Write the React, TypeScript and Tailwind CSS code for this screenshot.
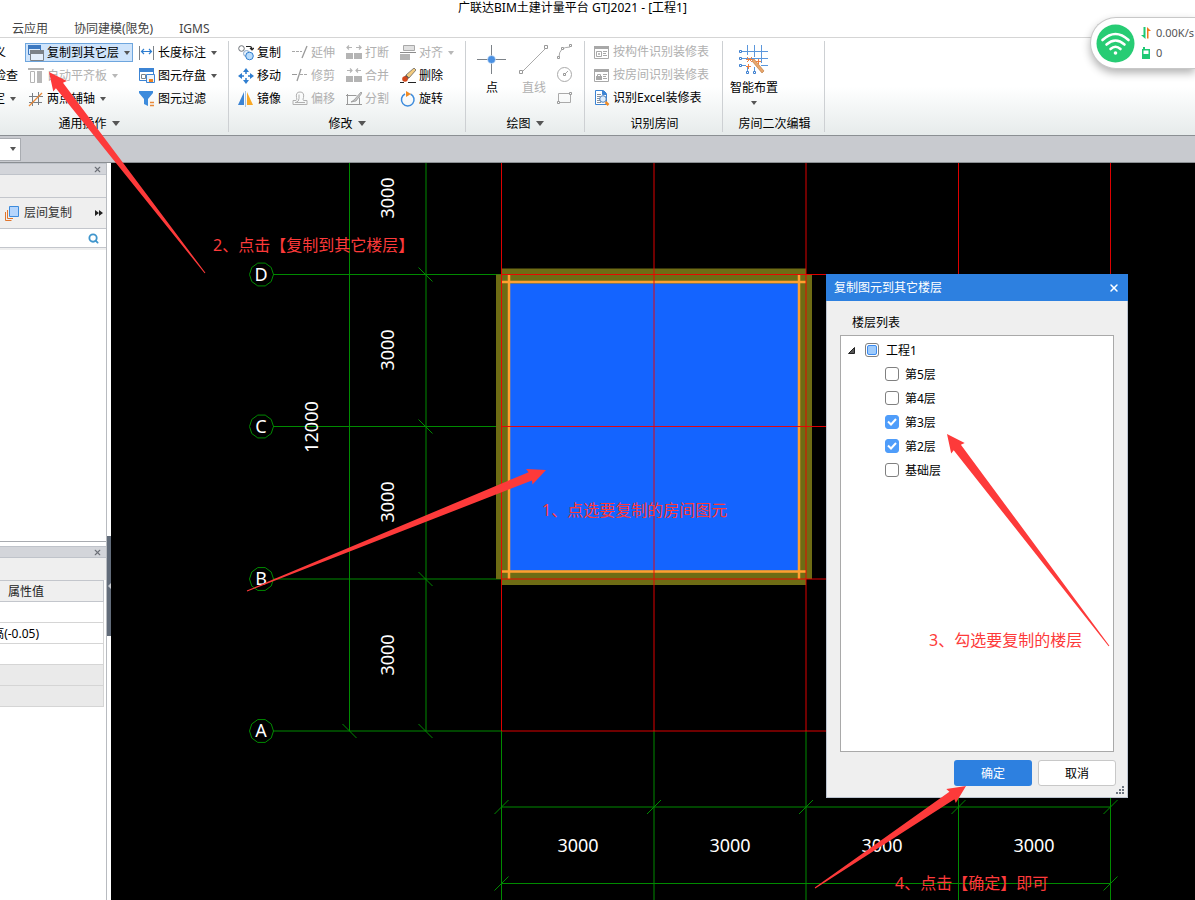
import React, { useState } from 'react';
import { Search, X } from 'lucide-react';

interface IconProps {
  size?: number;
  children: React.ReactNode;
}

function Icon({ size = 16, children }: IconProps) {
  return (
    <svg width={size} height={size} viewBox={`0 0 ${size} ${size}`} fill="none" className="mt-px shrink-0" aria-hidden="true">
      {children}
    </svg>
  );
}

function Caret({ className = 'text-[#555]', wide = false }: { className?: string; wide?: boolean }) {
  return (
    <svg width={wide ? 8 : 6} height={wide ? 5 : 4} viewBox="0 0 6 4" preserveAspectRatio="none" className={`shrink-0 ${className}`} aria-hidden="true">
      <path d="M0 0h6L3 4z" fill="currentColor" />
    </svg>
  );
}

const icons = {
  copyFloor: (
    <Icon>
      <path d="M0.5 0.5h12v9h-12z" fill="#dcebfb" stroke="#3c78c0" />
      <path d="M0 0h13v4H0z" fill="#3c78c0" />
      <path d="M2.5 5.5h13v10h-13z" fill="#e4eefa" stroke="#7c8288" />
      <path d="M2 5h14v4H2z" fill="#7c8288" />
    </Icon>
  ),
  alignSlab: (
    <Icon>
      <path d="M0 1h16" stroke="#b4b4b4" strokeWidth="2" />
      <path d="M2.5 3.500h4v11h-4z" stroke="#b4b4b4" />
      <path d="M9 3h5v12H9z" fill="#b8b8b8" />
    </Icon>
  ),
  axis: (
    <Icon>
      <path d="M4.500 2v13M10.500 1v13M1 5.500h14M1 11.500h13" stroke="#7a7f85" />
      <path d="M1 15L14 2" stroke="#e8893a" strokeWidth="1.300" />
    </Icon>
  ),
  length: (
    <Icon>
      <path d="M0.500 1v14M14.500 1v14" stroke="#7c8288" />
      <path d="M2.500 6.500h10M5 4L2.500 6.500 5 9M10 4l2.500 2.500L10 9" stroke="#2f7ed0" strokeWidth="1.200" />
    </Icon>
  ),
  save: (
    <Icon>
      <path d="M0.500 0.500h14v12h-14z" fill="#fff" stroke="#3c84d4" />
      <path d="M0 0h15v4H0z" fill="#3c84d4" />
      <path d="M2.500 6.500h4v4h-4z" stroke="#7c8288" />
      <path d="M7.500 6.500h8v8h-8z" fill="#eef4fb" stroke="#3c84d4" />
      <path d="M10 11h4v3h-4z" fill="#ee8424" />
    </Icon>
  ),
  filter: (
    <Icon>
      <path d="M0 0h14v2L9 8v7l-4-2V8L0 2z" fill="#3d8bdc" />
      <path d="M11 11.500h4M11 14.500h4" stroke="#e8893a" strokeWidth="1.300" />
    </Icon>
  ),
  copy: (
    <Icon>
      <circle cx="3.500" cy="3.500" r="2.800" stroke="#6a6f75" />
      <circle cx="8.500" cy="8.500" r="3" fill="#e6f1fc" stroke="#8aa8c8" />
      <circle cx="11.500" cy="11" r="3.800" fill="#b9dcfb" stroke="#2f7ed0" />
      <path d="M8 1.500h4q2 0 2 3M12 3l2 2 2-2" stroke="#222" strokeWidth="1.200" />
    </Icon>
  ),
  move: (
    <Icon>
      <path d="M8 0l3 4H5zM8 16l3-4H5zM0 8l4-3v6zM16 8l-4-3v6z" fill="#2f7ed0" />
      <path d="M8 3v3M8 10v3M3 8h3M10 8h3" stroke="#2f7ed0" strokeWidth="1.500" />
    </Icon>
  ),
  mirror: (
    <Icon>
      <path d="M6 1v13H0z" fill="#3c84d4" />
      <path d="M9 1v13h6z" fill="#f9a825" />
      <path d="M7.500 0v16" stroke="#a8c4e0" />
    </Icon>
  ),
  extend: (
    <Icon>
      <path d="M0 6.500h10" stroke="#a8a8a8" strokeDasharray="3 1" />
      <path d="M15 1l-5 12" stroke="#9a9a9a" strokeWidth="1.300" />
    </Icon>
  ),
  trim: (
    <Icon>
      <path d="M0 6.500h5" stroke="#9a9a9a" />
      <path d="M9 1L5 13" stroke="#9a9a9a" strokeWidth="1.300" />
      <path d="M8 6.500h8" stroke="#a8a8a8" strokeDasharray="3 1" />
    </Icon>
  ),
  offset: (
    <Icon>
      <path d="M1 13.500h14v-4h-3.500q-1-1 0-3 1-5.500-3.500-5.500t-3.500 5.500q1 2-0.500 3H1z" stroke="#b0b0b0" />
      <path d="M3 11.500h10M7 3.500v4q0 3-3 4" stroke="#b0b0b0" />
    </Icon>
  ),
  split: (
    <Icon>
      <path d="M0 8h7v6H0zM8 8h8v6H8z" fill="#b4b4b4" />
      <path d="M1 2.500h5M3 0.500l-2 2 2 2M10 2.500h5M13 0.500l2 2-2 2" stroke="#b4b4b4" strokeWidth="1.200" />
    </Icon>
  ),
  merge: (
    <Icon>
      <path d="M0 8h7v6H0zM8 8h8v6H8z" fill="#b4b4b4" />
      <path d="M1 2.500h5M4 0.500l2 2-2 2M10 2.500h5M12 0.500l-2 2 2 2" stroke="#b4b4b4" strokeWidth="1.200" />
    </Icon>
  ),
  cut: (
    <Icon>
      <path d="M1.500 4.500h9M1.500 4.500v9h12v-7M0 4.500h3M12 13.500h4M0 13.500h3M1.500 3v3" stroke="#9a9a9a" />
      <path d="M15 1L8 9l-3 2 5-1 6-8z" fill="#c8c8c8" stroke="#8c8c8c" strokeWidth="0.700" />
    </Icon>
  ),
  align: (
    <Icon>
      <path d="M3.500 0.500h11v5h-11z" fill="#e0e0e0" stroke="#a8a8a8" />
      <path d="M0 7.500h16" stroke="#8c8c8c" />
      <path d="M0 9h10v6H0z" fill="#b4b4b4" />
    </Icon>
  ),
  erase: (
    <Icon>
      <path d="M14 0l2 2-7 8-3-3z" fill="#f3cb7e" stroke="#555" strokeWidth="0.700" />
      <path d="M6 7l3 3-2 2-3-3z" fill="#555" />
      <circle cx="5" cy="11" r="2.800" fill="#d2481c" />
      <path d="M0 14.500h4M8 14.500h8" stroke="#222" />
    </Icon>
  ),
  rotate: (
    <Icon>
      <path d="M10.500 3A6.300 6.300 0 1 1 5 3" stroke="#3d8bdc" strokeWidth="1.500" />
      <path d="M6 0l5 3-5 3z" fill="#f08a24" />
    </Icon>
  ),
  arc: (
    <Icon>
      <path d="M2 13Q2 3 13 3" stroke="#aaa" />
      <path d="M0.500 12.500h2v2h-2zM4.500 3.500h2v2h-2zM12.500 0.500h2v2h-2z" fill="#fff" stroke="#999" />
    </Icon>
  ),
  circle: (
    <Icon>
      <circle cx="7.500" cy="7.500" r="7" stroke="#aaa" />
      <path d="M7 8l4-4" stroke="#aaa" />
      <path d="M6.500 6.500h2v2h-2z" fill="#fff" stroke="#999" />
    </Icon>
  ),
  rect: (
    <Icon>
      <path d="M1.500 3.500h12v9h-12z" stroke="#aaa" />
      <path d="M0.500 11.500h2v2h-2zM12.500 2.500h2v2h-2z" fill="#fff" stroke="#999" />
    </Icon>
  ),
  byPart: (
    <Icon>
      <path d="M0.500 1.500h14v12h-14z" stroke="#a8a8a8" />
      <path d="M0 1h15v3H0z" fill="#a8a8a8" />
      <path d="M2.500 6.500h5v5h-5zM4.500 8.500h1v1h-1zM9 6.500h4M9 8.500h3M9 10.500h4" stroke="#a8a8a8" />
    </Icon>
  ),
  byRoom: (
    <Icon>
      <path d="M0.500 1.500h14v12h-14z" stroke="#a8a8a8" />
      <path d="M0 1h15v3H0z" fill="#a8a8a8" />
      <path d="M2 8h6v4H2z" fill="#a8a8a8" />
      <path d="M3.500 8V6.500h3V8M9 6.500h4M9 8.500h3M9 10.500h4" stroke="#a8a8a8" />
    </Icon>
  ),
  excel: (
    <Icon>
      <path d="M1.500 0.500h8l3 3v11h-11z" fill="#fff" stroke="#3c84d4" />
      <path d="M8.500 0.500v4h4z" fill="#3c84d4" stroke="#3c84d4" />
      <path d="M3 4.500h4M3 6.500h3M3 8.500h3M3 10.500h3M3 12.500h4" stroke="#8a9098" />
      <circle cx="9" cy="9" r="3.300" fill="#dcecfb" stroke="#4a7db8" />
      <path d="M11.500 12l3 3" stroke="#f08a24" strokeWidth="2.500" />
    </Icon>
  ),
  point: (
    <Icon size={30}>
      <path d="M14.500 0v29M0 14.500h29" stroke="#7c8288" />
      <circle cx="14.500" cy="14.500" r="4" fill="#4a90e2" stroke="#fff" strokeWidth="0.500" />
    </Icon>
  ),
  line: (
    <Icon size={30}>
      <path d="M3 27L27 3" stroke="#aaa" />
      <path d="M0.500 25.500h3v3h-3zM25.500 0.500h3v3h-3z" fill="#fff" stroke="#999" />
    </Icon>
  ),
  smart: (
    <Icon size={30}>
      <path d="M3 6.500h26M3 13.500h26M3 20.500h4M22 20.500h7M8.500 0v10M15.500 0v12M22.500 0v18M8.500 22v4M15.500 22v4" stroke="#5b97dc" />
      <path d="M0.500 5.500h2v2h-2zM0.500 12.500h2v2h-2zM0.500 19.500h2v2h-2zM7.500 26.500h2v2h-2zM14.500 26.500h2v2h-2z" fill="#fff" stroke="#3d7fcf" />
      <path d="M13 16l10 12 2-2-10-12z" fill="#e8a66c" stroke="#b87437" strokeWidth="0.600" />
      <path d="M8 12l5 5M13 12l-5 5M7 14.500h7M9.500 19v5M7 21.500h5M19.500 14v5M17 16.500h5" stroke="#f08040" />
    </Icon>
  ),
};

interface RibbonButtonProps {
  icon: React.ReactNode;
  label: string;
  disabled?: boolean;
  active?: boolean;
  caret?: boolean;
}

function RibbonButton({ icon, label, disabled, active, caret }: RibbonButtonProps) {
  return (
    <div className="flex h-[23px] items-center">
      <button
        type="button"
        disabled={disabled}
        className={`flex h-[19px] items-center gap-[3px] border whitespace-nowrap ${
          active ? 'border-[#6ea6de] bg-[#cfe4fb]' : 'border-transparent'
        } px-[2px] ${disabled ? 'text-[#b0b0b0]' : 'text-black'}`}
      >
        {icon}
        <span>{label}</span>
        {caret && (
          <span className="flex pl-[2px]">
            <Caret className={disabled ? 'text-[#b8b8b8]' : 'text-[#555]'} />
          </span>
        )}
      </button>
    </div>
  );
}

function Divider() {
  return <div className="my-[3px] w-px shrink-0 bg-[#cdd0d3]" />;
}

function GroupLabel({ children, caret, className = 'pt-0.5' }: { children: string; caret?: boolean; className?: string }) {
  return (
    <div className={`flex h-[26px] items-center justify-center gap-[5px] whitespace-nowrap ${className}`}>
      {children}
      {caret && <Caret wide />}
    </div>
  );
}

function Ribbon() {
  return (
    <div className="flex h-[98px] border-b border-[#8b8f93] bg-linear-to-b from-white from-50% to-[#e6ebeb]">
      {/* General operations */}
      <div className="flex w-[228px] shrink-0 flex-col pt-[3px]">
        <div className="flex">
          <div className="flex w-[24px] flex-col overflow-hidden">
            <button type="button" className="flex h-[23px] items-center justify-end pr-[18px] whitespace-nowrap">义</button>
            <button type="button" className="flex h-[23px] items-center justify-end pr-[6px] whitespace-nowrap">检查</button>
            <button type="button" className="flex h-[23px] items-center justify-end gap-[5px] pr-[8px] whitespace-nowrap">
              定
              <Caret />
            </button>
          </div>
          <div className="w-[112px] pl-px">
            <RibbonButton icon={icons.copyFloor} label="复制到其它层" active caret />
            <RibbonButton icon={icons.alignSlab} label="自动平齐板" disabled caret />
            <RibbonButton icon={icons.axis} label="两点辅轴" caret />
          </div>
          <div>
            <RibbonButton icon={icons.length} label="长度标注" caret />
            <RibbonButton icon={icons.save} label="图元存盘" caret />
            <RibbonButton icon={icons.filter} label="图元过滤" />
          </div>
        </div>
        <GroupLabel caret className="pt-0.5 pr-[50px]">通用操作</GroupLabel>
      </div>
      <Divider />

      {/* Modify */}
      <div className="flex w-[236px] shrink-0 flex-col pt-[3px]">
        <div className="grid grid-cols-[54px_54px_54px_60px] pl-[6px]">
          <RibbonButton icon={icons.copy} label="复制" />
          <RibbonButton icon={icons.extend} label="延伸" disabled />
          <RibbonButton icon={icons.split} label="打断" disabled />
          <RibbonButton icon={icons.align} label="对齐" disabled caret />
          <RibbonButton icon={icons.move} label="移动" />
          <RibbonButton icon={icons.trim} label="修剪" disabled />
          <RibbonButton icon={icons.merge} label="合并" disabled />
          <RibbonButton icon={icons.erase} label="删除" />
          <RibbonButton icon={icons.mirror} label="镜像" />
          <RibbonButton icon={icons.offset} label="偏移" disabled />
          <RibbonButton icon={icons.cut} label="分割" disabled />
          <RibbonButton icon={icons.rotate} label="旋转" />
        </div>
        <GroupLabel caret>修改</GroupLabel>
      </div>
      <Divider />

      {/* Draw */}
      <div className="flex w-[118px] shrink-0 flex-col pt-[3px]">
        <div className="flex">
          <button type="button" className="flex w-[52px] flex-col items-center gap-[5px] pt-[3px] leading-4">
            {icons.point}
            点
          </button>
          <button type="button" disabled className="flex w-[32px] flex-col items-center gap-[5px] pt-[3px] leading-4 text-[#b0b0b0]">
            {icons.line}
            直线
          </button>
          <div className="flex flex-col pl-[7px]">
            <button type="button" disabled aria-label="弧线" className="flex h-[23px] items-start pt-0.5">{icons.arc}</button>
            <button type="button" disabled aria-label="圆" className="flex h-[23px] items-start pt-0.5">{icons.circle}</button>
            <button type="button" disabled aria-label="矩形" className="flex h-[23px] items-start pt-0.5">{icons.rect}</button>
          </div>
        </div>
        <GroupLabel caret>绘图</GroupLabel>
      </div>
      <Divider />

      {/* Room recognition */}
      <div className="flex w-[137px] shrink-0 flex-col pt-[3px] pl-[6px]">
        <RibbonButton icon={icons.byPart} label="按构件识别装修表" disabled />
        <RibbonButton icon={icons.byRoom} label="按房间识别装修表" disabled />
        <RibbonButton icon={icons.excel} label="识别Excel装修表" />
        <GroupLabel className="pt-1 pr-1">识别房间</GroupLabel>
      </div>
      <Divider />

      {/* Room editing */}
      <div className="flex w-[101px] shrink-0 flex-col pt-[3px]">
        <button type="button" className="flex h-[69px] w-[62px] flex-col items-center gap-[5px] pt-[3px] leading-4 whitespace-nowrap">
          {icons.smart}
          智能布置
          <Caret />
        </button>
        <GroupLabel className="pt-1 pl-0.5">房间二次编辑</GroupLabel>
      </div>
      <Divider />
    </div>
  );
}

function PanelHeader() {
  return (
    <div className="flex h-[12px] items-center justify-end border-y border-[#bfc3ca] bg-[#d3d5da] pr-1">
      <button type="button" aria-label="关闭" className="text-[#6c7077]">
        <X size={9} strokeWidth={3} />
      </button>
    </div>
  );
}

function SidePanel() {
  return (
    <div className="w-[107px] shrink-0 border-r border-[#b8bbc0] bg-white">
      <PanelHeader />
      <div className="h-[22px] bg-[#efefef]" />
      <div className="flex h-[32px] items-center border-y border-[#c3c6cc] bg-[#efefef] pr-[3px] pl-[5px] text-[#333]">
        <button type="button" className="flex flex-1 items-center gap-[3px] whitespace-nowrap">
          <Icon>
            <path d="M0.500 6v8.500h6M2.500 4v8.500H8" stroke="#e0762e" />
            <path d="M4.500 0.500h9v10h-9z" fill="#b5d5fc" stroke="#3d8bdc" />
          </Icon>
          层间复制
        </button>
        <svg width="8" height="6" viewBox="0 0 8 6" aria-hidden="true">
          <path d="M0 0l4 3-4 3zM4 0l4 3-4 3z" fill="#222" />
        </svg>
      </div>
      <div className="flex h-[19px] items-center border-b border-[#c3c6cc] pr-[7px]">
        <input type="text" aria-label="搜索构件" className="min-w-0 flex-1 outline-none" />
        <Search size={11} strokeWidth={4} className="text-[#3f95cc]" />
      </div>
      <div className="h-[294px] border-t-2 border-b border-t-[#efefef] border-b-[#a8abb0]" />
      <div className="h-1" />
      <PanelHeader />
      <div className="h-[22px] bg-[#efefef]" />
      <table className="w-[104px] table-fixed border-collapse text-left">
        <thead>
          <tr>
            <th className="h-[21px] border-t border-r border-b border-[#c3c6cc] bg-[#efefef] pt-0.5 pb-0 pl-2 leading-4 font-normal text-[#222]">
              属性值
            </th>
          </tr>
        </thead>
        <tbody>
          <tr><td className="h-[21px] border-r border-b border-[#d5d5d5]" /></tr>
          <tr>
            <td className="h-[21px] overflow-hidden border-r border-b border-[#d5d5d5] p-0 pt-0.5 leading-4 whitespace-nowrap">
              <div className="flex w-[39px] justify-end">高(-0.05)</div>
            </td>
          </tr>
          <tr><td className="h-[21px] border-r border-b border-[#d5d5d5]" /></tr>
          <tr><td className="h-[21px] border-r border-b border-[#d5d5d5] bg-[#eaeaea]" /></tr>
          <tr><td className="h-[21px] border-r border-b border-[#d5d5d5] bg-[#eaeaea]" /></tr>
        </tbody>
      </table>
    </div>
  );
}

const AXIS_X = [501.5, 654, 806, 958.5, 1110.5];
const AXIS_Y = [
  { name: 'D', y: 274.5 },
  { name: 'C', y: 426.5 },
  { name: 'B', y: 579 },
  { name: 'A', y: 731 },
];

const BUBBLE = Array.from({ length: 10 }, (_, i) => {
  const a = (i * Math.PI) / 5;
  return `${261.5 + 12 * Math.cos(a)},${12 * Math.sin(a)}`;
}).join(' ');

// Plan view in window coordinates; the group shift brings it to the canvas origin.
function Drawing() {
  return (
    <svg className="absolute inset-0 h-full w-full" aria-label="轴网平面图">
      <g transform="translate(-111 -163)" fontSize="18" fill="#fff" textAnchor="middle">
        <g stroke="#008a00" fill="none">
          <path d="M349.5 163V731M426 163V731" />
          <path d="M342.500 724l14 14" />
          <path d="M501.500 807H1110.500M501.500 883.500H1110.500" />
          {AXIS_X.map((x) => (
            <path key={x} d={`M${x} 731V900M${x - 7} 814l14 -14`} />
          ))}
          <path d="M494.500 890.500l14-14M1103.500 890.500l14-14" />
          {AXIS_Y.map((a) => (
            <g key={a.name}>
              <path d={`M273 ${a.y}H501.500M418.500 ${a.y - 7}l14 14`} />
              <polygon points={BUBBLE} transform={`translate(0 ${a.y})`} />
            </g>
          ))}
        </g>

        {/* Room: walls, finish faces, selected floor */}
        <path d="M496 274.500H812V579H496z" fill="#6e6c14" />
        <path d="M501.500 268.500H806V585H501.500z" fill="#6e6c14" />
        <path d="M510 283.500H798V570.500H510z" fill="#1464ff" />
        <path d="M509 274.500V579M799 274.500V579M501.500 282H806M501.500 571.500H806" stroke="#ffa030" strokeWidth="2.500" />

        <g stroke="#f00000" strokeOpacity="0.920">
          {AXIS_X.map((x) => (
            <path key={x} d={`M${x} 163V731`} />
          ))}
          {AXIS_Y.map((a) => (
            <path key={a.name} d={`M501.500 ${a.y}H1110.500`} />
          ))}
        </g>

        {AXIS_Y.map((a) => (
          <text key={a.name} x="261" y={a.y + 6}>{a.name}</text>
        ))}
        {[198, 350, 502, 655].map((y) => (
          <text key={y} transform={`translate(394 ${y}) rotate(-90)`}>3000</text>
        ))}
        <text transform="translate(318 427) rotate(-90)">12000</text>
        {[578, 730, 882, 1034].map((x) => (
          <text key={x} x={x} y="852">3000</text>
        ))}
      </g>
    </svg>
  );
}

const BOX =
  'size-[14px] shrink-0 appearance-none rounded-[3px] border border-[#808080] bg-white checked:border-[#4f9dfa] checked:bg-[#4f9dfa]';

function CopyDialog() {
  const [floors, setFloors] = useState([
    { name: '第5层', checked: false },
    { name: '第4层', checked: false },
    { name: '第3层', checked: true },
    { name: '第2层', checked: true },
    { name: '基础层', checked: false },
  ]);

  const toggle = (name: string) => {
    setFloors(floors.map((f) => (f.name === name ? { ...f, checked: !f.checked } : f)));
  };

  return (
    <div role="dialog" aria-label="复制图元到其它楼层" className="absolute top-[111px] left-[715px] w-[302px] bg-[#efefef]">
      <div className="flex h-[27px] items-center justify-between bg-[#2d80e0] px-2 text-white">
        复制图元到其它楼层
        <button type="button" aria-label="关闭" className="flex">
          <X size={12} strokeWidth={3} />
        </button>
      </div>
      <div className="border-x border-b border-[#bcc4d0] px-[13px]">
        <div className="pt-[14px] pb-1 pl-3 leading-4">楼层列表</div>
        <div className="h-[417px] border border-[#a9a9a9] bg-white pt-[2px]">
          <div className="flex h-6 items-center pl-[7px]">
            <svg width="7" height="7" viewBox="0 0 7 7" aria-hidden="true">
              <path d="M6.500 0.500v6h-6z" fill="#555" stroke="#222" />
            </svg>
            <label className="flex items-center gap-[7px] pl-[10px]">
              <span className="relative flex">
                <input type="checkbox" className={BOX} />
                <span className="pointer-events-none absolute inset-[2px] rounded-[2px] border border-[#3d8bef] bg-[#9fcbfb]" />
              </span>
              <span className="pt-px">工程1</span>
            </label>
          </div>
          {floors.map((f) => (
            <label key={f.name} className="flex h-6 items-center gap-[6px] pl-11">
              <span className="relative flex">
                <input type="checkbox" checked={f.checked} onChange={() => toggle(f.name)} className={BOX} />
                {f.checked && (
                  <svg className="pointer-events-none absolute inset-0" width="14" height="14" viewBox="0 0 14 14" fill="none" aria-hidden="true">
                    <path d="M3 6.500l3 3 5-5.500" stroke="#fff" strokeWidth="2" />
                  </svg>
                )}
              </span>
              <span className="pt-px">{f.name}</span>
            </label>
          ))}
        </div>
        <div className="flex justify-end gap-[6px] pt-2">
          <button type="button" className="h-[26px] w-[78px] rounded-[3px] bg-[#2d80e0] pt-0.5 text-white">确定</button>
          <button type="button" className="-mr-0.5 h-[26px] w-[78px] rounded-[3px] border border-[#c8c8c8] bg-white pt-0.5">取消</button>
        </div>
        <div className="-mr-[10px] flex h-[11px] items-end justify-end pb-[3px]">
          <svg width="8" height="8" viewBox="0 0 8 8" aria-hidden="true">
            <path d="M6 0h2v2H6zM3 3h2v2H3zM6 3h2v2H6zM0 6h2v2H0zM3 6h2v2H3zM6 6h2v2H6z" fill="#6f7680" />
          </svg>
        </div>
      </div>
    </div>
  );
}

function NetWidget() {
  return (
    <div className="absolute top-[17px] right-0 flex h-[52px] w-[105px] items-center gap-[6px] rounded-l-full border border-r-0 border-[#c8c8c8] bg-white pl-[5px] text-[11px] text-[#555] shadow-[0_4px_8px_rgba(0,0,0,0.3)]">
      <svg width="39" height="39" viewBox="0 0 39 39" fill="none" className="shrink-0" aria-hidden="true">
        <circle cx="19.500" cy="19.500" r="19" fill="#27cc74" />
        <g stroke="#fff" strokeWidth="2.600" strokeLinecap="round">
          <path d="M6.500 16q13-12 26 0M10.500 20.500q9-8 18 0M14.500 25q5-4.500 10 0" />
        </g>
        <circle cx="19.500" cy="29" r="1.800" fill="#fff" />
      </svg>
      <div className="flex flex-col whitespace-nowrap">
        <div className="flex h-5 items-center gap-[5px]">
          <svg width="10" height="12" viewBox="0 0 10 12" aria-hidden="true">
            <path d="M2.500 0h2v12L0 8h2.500z" fill="#1fc874" />
            <path d="M6 0l4 4H7.500v7.500H6z" fill="#f07818" />
          </svg>
          0.00K/s
        </div>
        <div className="flex h-5 items-center gap-[5px]">
          <svg width="10" height="12" viewBox="0 0 10 12" aria-hidden="true">
            <path d="M1 2h1V0h2v2h5v10H1z" fill="#1fc874" />
            <path d="M2.500 3.500h5V7h-5z" fill="#fff" />
          </svg>
          0
        </div>
      </div>
    </div>
  );
}

// Tapered pointer from a thin tail to a barbed head.
function pointer(x1: number, y1: number, x2: number, y2: number) {
  const len = Math.hypot(x2 - x1, y2 - y1);
  const ux = (x2 - x1) / len;
  const uy = (y2 - y1) / len;
  const at = (back: number, side: number) =>
    `${(x2 - ux * back - uy * side).toFixed(1)},${(y2 - uy * back + ux * side).toFixed(1)}`;
  return [at(0, 0), at(18, 8.5), at(17, 4.5), at(len, 0.5), at(len, -0.5), at(17, -4.5), at(18, -8.5)].join(' ');
}

function Annotations() {
  return (
    <svg className="pointer-events-none absolute inset-0 h-full w-full" aria-hidden="true">
      <g fill="#fd3a3a" fontSize="16">
        <polygon points={pointer(205, 273, 49, 72)} />
        <polygon points={pointer(247, 591, 546, 470)} />
        <polygon points={pointer(1109, 646, 947, 434)} />
        <polygon points={pointer(815, 888, 966, 786)} />
        <text x="542" y="516">1、点选要复制的房间图元</text>
        <text x="213" y="251">2、点击【复制到其它楼层】</text>
        <text x="929" y="646">3、勾选要复制的楼层</text>
        <text x="895" y="889">4、点击【确定】即可</text>
      </g>
    </svg>
  );
}

export default function App() {
  return (
    <div className="relative flex min-h-screen flex-col overflow-hidden bg-white font-['Noto_Sans','Noto_Sans_CJK_SC',sans-serif] text-[12px] leading-4 text-black">
      <div className="flex h-5 items-start justify-center pr-[50px]">广联达BIM土建计量平台 GTJ2021 - [工程1]</div>
      <nav className="flex h-[18px] items-center gap-[26px] border-b border-[#d5d5d5] pl-3 text-[#444]">
        <a href="#cloud">云应用</a>
        <a href="#model">协同建模(限免)</a>
        <a href="#igms">IGMS</a>
      </nav>
      <Ribbon />
      <div className="flex h-[27px] items-center border-b border-[#8b8f93] bg-[#c8cacf]">
        <div className="relative flex items-center">
          <select aria-label="楼层" className="h-[23px] w-[21px] appearance-none border border-l-0 border-[#a9acb1] bg-white" />
          <span className="pointer-events-none absolute right-[5px]">
            <Caret />
          </span>
        </div>
      </div>
      <div className="flex flex-1">
        <SidePanel />
        <div className="flex w-1 shrink-0 flex-col bg-white pt-[373px]">
          <button type="button" aria-label="折叠面板" className="flex h-[100px] items-center justify-end bg-[#626c7a]">
            <svg width="3" height="6" viewBox="0 0 3 6" aria-hidden="true">
              <path d="M3 0v6L0 3z" fill="#c8ccd2" />
            </svg>
          </button>
        </div>
        <main className="relative min-h-[737px] flex-1 overflow-hidden bg-black">
          <Drawing />
          <CopyDialog />
        </main>
      </div>
      <NetWidget />
      <Annotations />
    </div>
  );
}
